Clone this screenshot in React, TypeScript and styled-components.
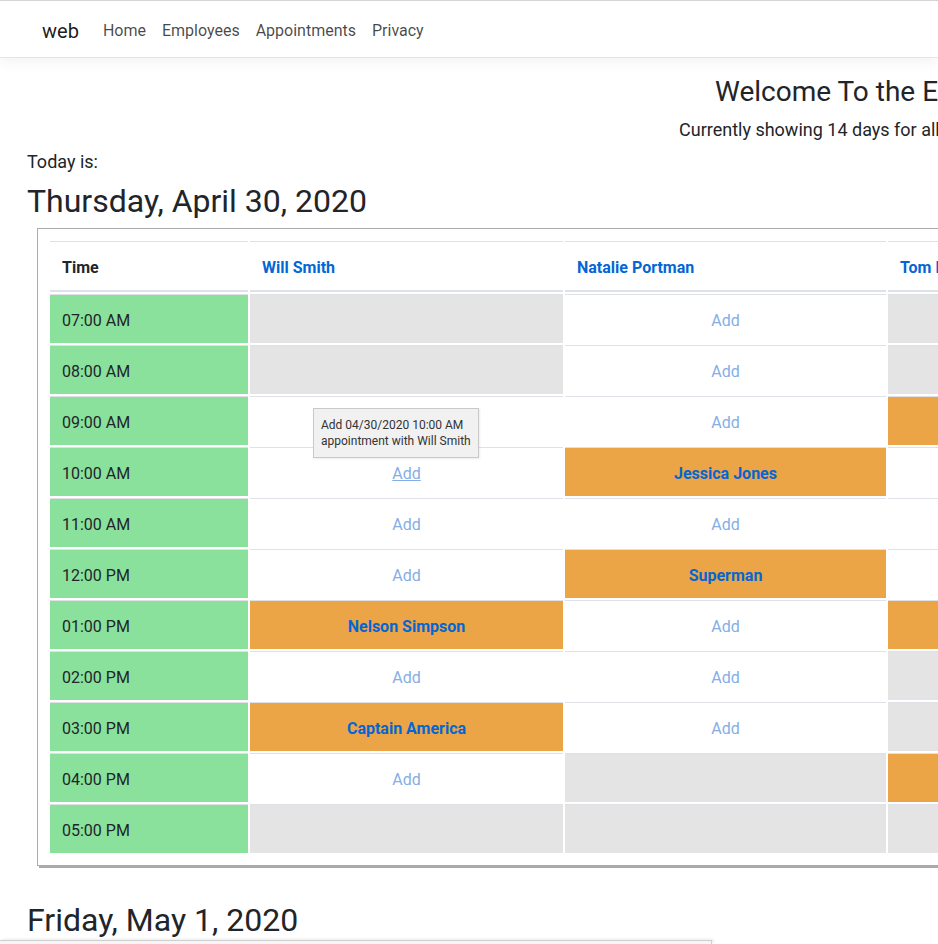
import React from 'react';
import styled, { createGlobalStyle } from 'styled-components';

const Global = createGlobalStyle`
  html, body { margin: 0; padding: 0; overflow: hidden; background: #fff; }
  body {
    font-family: Roboto, "Open Sans", "Noto Sans", sans-serif;
    font-size: 16px;
    line-height: 1.5;
    color: #212529;
  }
  * { box-sizing: border-box; }
`;

const Navbar = styled.nav`
  display: flex;
  align-items: center;
  height: 58px;
  padding: 3px 0 0 42px;
  border-top: 1px solid #d4d4d4;
  border-bottom: 1px solid #e5e5e5;
  box-shadow: 0 4px 12px rgba(0, 0, 0, 0.05);
`;

const Brand = styled.a`
  font-size: 20px;
  color: rgba(0, 0, 0, 0.9);
  text-decoration: none;
  margin-right: 16px;
  line-height: 30px;
`;

const NavLink = styled.a`
  padding: 8px;
  color: rgba(0, 0, 0, 0.72);
  text-decoration: none;
  font-size: 16px;
`;

const Main = styled.main`
  padding: 16px 0 0 27px;
`;

const Hero = styled.div`
  white-space: nowrap;
  margin-bottom: 5px;
`;

const HeroTitle = styled.h3`
  margin: 0 0 8px;
  padding: 2px 0 0 688px;
  font-size: 28px;
  font-weight: 400;
  line-height: 32px;
`;

const HeroSub = styled.p`
  margin: 0;
  font-size: 18px;
  line-height: 27px;
  padding-left: 652px;
`;

const TodayLabel = styled.div`
  font-size: 18px;
  line-height: 27px;
`;

const DayHeading = styled.h2`
  margin: 7px 0 8px;
  font-size: 32px;
  font-weight: 400;
  line-height: 1.2;
  white-space: nowrap;
`;

const Card = styled.div`
  margin: 0 0 35px 10px;
  width: max-content;
  padding: 10px;
  border: 1px solid #ababab;
  box-shadow: 2px 2px 0 #aaa;
`;

const Table = styled.table`
  border-collapse: separate;
  border-spacing: 2px;
  table-layout: fixed;
`;

const HeadCell = styled.th<{ $w: number }>`
  width: ${(p) => p.$w}px;
  padding: 14px 12px 10px;
  text-align: left;
  font-weight: 700;
  vertical-align: bottom;
  border-top: 1px solid #dee2e6;
  border-bottom: 2px solid #dee2e6;
  line-height: 24px;
`;

const NameLink = styled.a`
  color: #0366d6;
  text-decoration: none;
  white-space: nowrap;
`;

type Kind = 'time' | 'off' | 'open' | 'booked';

const bg: Record<Kind, string> = {
  time: '#89e19c',
  off: '#e4e4e4',
  open: '#ffffff',
  booked: '#eca546',
};

const Cell = styled.td<{ $kind: Kind }>`
  position: relative;
  padding: 14px 12px 10px;
  height: 49px;
  line-height: 24px;
  border-top: 1px solid #dee2e6;
  background: ${(p) => bg[p.$kind]};
  text-align: ${(p) => (p.$kind === 'time' ? 'left' : 'center')};
  white-space: nowrap;
`;

const AddLink = styled.a<{ $hover?: boolean }>`
  color: #86aee6;
  text-decoration: ${(p) => (p.$hover ? 'underline' : 'none')};
`;

const BookedName = styled.a`
  color: #0366d6;
  font-weight: 700;
  text-decoration: none;
`;

const Tooltip = styled.div`
  position: absolute;
  left: 63px;
  top: -40px;
  z-index: 5;
  padding: 8px 7px;
  background: #f1f1f1;
  border: 1px solid #c9c9c9;
  box-shadow: 1px 1px 2px rgba(0, 0, 0, 0.08);
  font-size: 12px;
  line-height: 16px;
  color: #333;
  text-align: left;
  white-space: nowrap;
`;

const StatusBubble = styled.div`
  position: fixed;
  left: 0;
  bottom: 0;
  width: 712px;
  height: 4px;
  background: #f6f6f6;
  border-top: 1px solid #cfcfcf;
  border-right: 1px solid #cfcfcf;
  box-shadow: 2px -1px 3px rgba(0, 0, 0, 0.08);
`;

type Slot = { k: 'off' | 'open' } | { k: 'booked'; name: string };

const employees = [
  { name: 'Will Smith', w: 313 },
  { name: 'Natalie Portman', w: 321 },
  { name: 'Tom Hanks', w: 321 },
];

const O: Slot = { k: 'open' };
const X: Slot = { k: 'off' };
const B = (name: string): Slot => ({ k: 'booked', name });

const times = [
  '07:00 AM', '08:00 AM', '09:00 AM', '10:00 AM', '11:00 AM', '12:00 PM',
  '01:00 PM', '02:00 PM', '03:00 PM', '04:00 PM', '05:00 PM',
];

const day1: Slot[][] = [
  [X, O, X],
  [X, O, X],
  [O, O, B('Bruce Wayne')],
  [O, B('Jessica Jones'), O],
  [O, O, O],
  [O, B('Superman'), O],
  [B('Nelson Simpson'), O, B('Tony Stark')],
  [O, O, X],
  [B('Captain America'), O, X],
  [O, X, B('Peter Parker')],
  [X, X, X],
];

const day2: Slot[][] = [
  [X, O, X],
  [O, O, X],
  [O, O, O],
  [O, O, O],
  [O, B('Bruce Banner'), O],
  [O, O, O],
  [O, O, O],
  [O, O, X],
  [O, O, X],
  [O, X, O],
  [X, X, X],
];

const Schedule: React.FC<{ rows: Slot[][]; hover?: boolean }> = ({ rows, hover }) => (
  <Card>
    <Table>
      <thead>
        <tr>
          <HeadCell $w={198}>Time</HeadCell>
          {employees.map((e) => (
            <HeadCell key={e.name} $w={e.w}>
              <NameLink href="#">{e.name}</NameLink>
            </HeadCell>
          ))}
        </tr>
      </thead>
      <tbody>
        {rows.map((row, ri) => (
          <tr key={times[ri]}>
            <Cell $kind="time">{times[ri]}</Cell>
            {row.map((s, ci) => {
              const isHover = hover && ri === 3 && ci === 0;
              return (
                <Cell key={ci} $kind={s.k}>
                  {s.k === 'open' && (
                    <AddLink href="#" $hover={isHover}>Add</AddLink>
                  )}
                  {s.k === 'booked' && <BookedName href="#">{s.name}</BookedName>}
                  {isHover && (
                    <Tooltip>
                      Add 04/30/2020 10:00 AM
                      <br />
                      appointment with Will Smith
                    </Tooltip>
                  )}
                </Cell>
              );
            })}
          </tr>
        ))}
      </tbody>
    </Table>
  </Card>
);

export default function App() {
  return (
    <>
      <Global />
      <Navbar>
        <Brand href="#">web</Brand>
        <NavLink href="#">Home</NavLink>
        <NavLink href="#">Employees</NavLink>
        <NavLink href="#">Appointments</NavLink>
        <NavLink href="#">Privacy</NavLink>
      </Navbar>
      <Main>
        <Hero>
          <HeroTitle>Welcome To the Event Scheduler</HeroTitle>
          <HeroSub>Currently showing 14 days for all employees</HeroSub>
        </Hero>
        <TodayLabel>Today is:</TodayLabel>
        <DayHeading>Thursday, April 30, 2020</DayHeading>
        <Schedule rows={day1} hover />
        <DayHeading>Friday, May 1, 2020</DayHeading>
        <Schedule rows={day2} />
      </Main>
      <StatusBubble />
    </>
  );
}
